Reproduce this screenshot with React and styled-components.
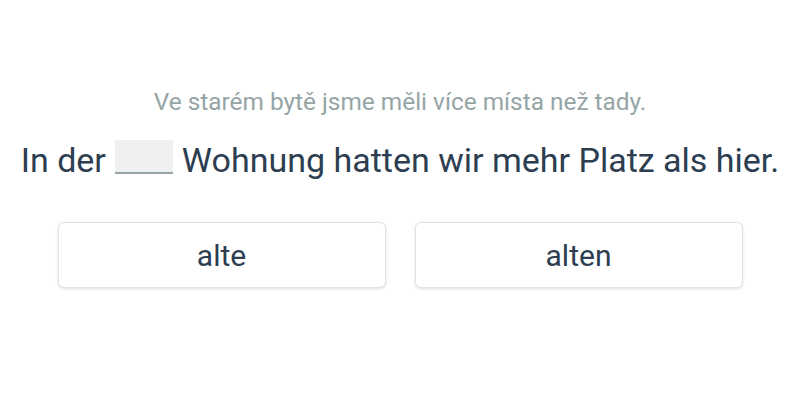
import styled, { createGlobalStyle } from 'styled-components'

const GlobalStyle = createGlobalStyle`
  body {
    margin: 0;
    background: #ffffff;
    font-family: Roboto, "Liberation Sans", sans-serif;
  }
`

const Page = styled.div`
  width: 800px;
  height: 400px;
  display: flex;
  flex-direction: column;
  align-items: center;
  padding-top: 87px;
  box-sizing: border-box;
`

const Hint = styled.p`
  margin: 0;
  font-size: 24.4px;
  line-height: 30px;
  color: #95a5a6;
`

const Sentence = styled.p`
  margin: 23px 0 0;
  font-size: 34px;
  line-height: 40px;
  color: #2c3e50;
  white-space: nowrap;
  display: flex;
  align-items: flex-start;
  gap: 9px;
`

const Blank = styled.span`
  display: inline-block;
  width: 58px;
  height: 32px;
  background: #eef0f2;
  border-bottom: 2px solid #95a5a6;
`

const Choices = styled.div`
  margin-top: 42px;
  display: grid;
  grid-template-columns: 328px 328px;
  gap: 29px;
`

const Choice = styled.button`
  height: 66px;
  background: #ffffff;
  border: 1px solid #dfe3e6;
  border-radius: 6px;
  box-shadow: 0 1px 3px rgba(0, 0, 0, 0.12);
  font-family: Roboto, "Liberation Sans", sans-serif;
  font-size: 30px;
  color: #2c3e50;
  cursor: pointer;
  &:hover {
    background: #f7f9fa;
  }
`

export default function App() {
  const options = ['alte', 'alten']
  return (
    <>
      <GlobalStyle />
      <Page>
        <Hint>Ve starém bytě jsme měli více místa než tady.</Hint>
        <Sentence>
          <span>In der</span>
          <Blank />
          <span>Wohnung hatten wir mehr Platz als hier.</span>
        </Sentence>
        <Choices>
          {options.map(o => (
            <Choice key={o}>{o}</Choice>
          ))}
        </Choices>
      </Page>
    </>
  )
}
